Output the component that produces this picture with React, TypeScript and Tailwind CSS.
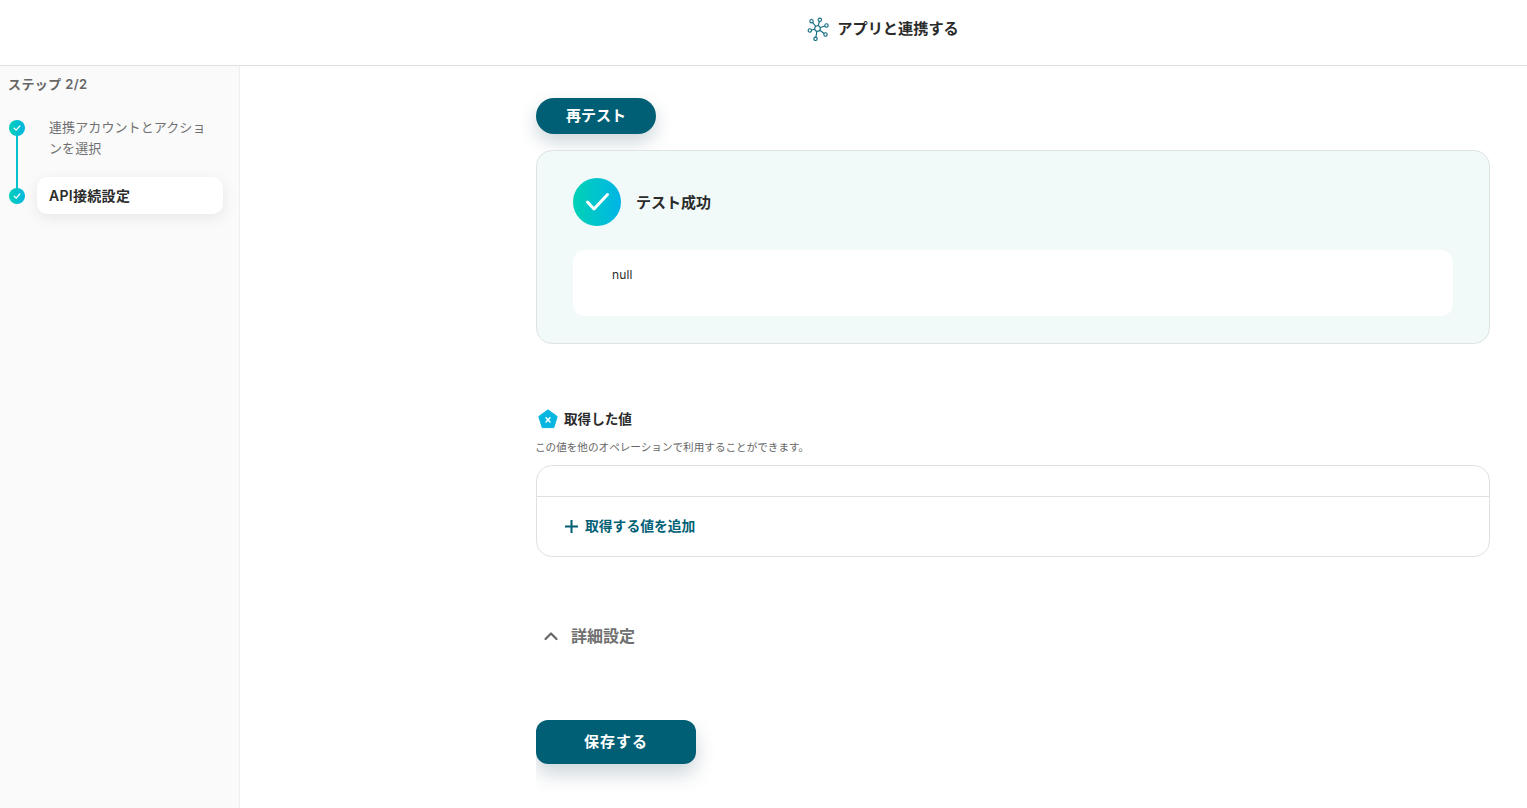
const font = { fontFamily: 'Inter, "Noto Sans CJK JP", sans-serif' };

function StepDot() {
  return (
    <span className="flex h-4 w-4 shrink-0 items-center justify-center rounded-full bg-gradient-to-r from-[#00d0b8] to-[#00b4e0]">
      <svg width="10" height="10" viewBox="0 0 10 10" fill="none" stroke="#fff" strokeWidth="1.2" strokeLinecap="round" strokeLinejoin="round">
        <path d="M2.2 5.2 4.2 7.1 7.8 3" />
      </svg>
    </span>
  );
}

function NetworkIcon() {
  const nodes = [
    [12.8, 2.8],
    [4.5, 4.2],
    [19.5, 8.5],
    [2.8, 13.5],
    [18.5, 17.5],
    [8.5, 21.8],
  ];
  return (
    <svg width="22" height="24" viewBox="0 0 22 24" fill="none" stroke="#0f6a80" strokeWidth="1.1">
      {nodes.map(([x, y]) => (
        <line key={`${x}-${y}`} x1="10.5" y1="11.5" x2={x} y2={y} />
      ))}
      <circle cx="10.5" cy="11.5" r="2.8" fill="#fff" />
      {nodes.map(([x, y]) => (
        <circle key={`${x}:${y}`} cx={x} cy={y} r="1.7" fill="#fff" />
      ))}
    </svg>
  );
}

export default function App() {
  return (
    <div style={font} className="flex h-[808px] w-full flex-col overflow-hidden bg-white text-[#2b2b2b]">
      <header className="flex h-[66px] shrink-0 items-center justify-center gap-[8px] border-b border-[#e0e0e0] pl-[239px] pb-[7px]">
        <NetworkIcon />
        <span className="text-[15.2px] font-semibold leading-none">アプリと連携する</span>
      </header>

      <div className="flex min-h-0 flex-1">
        <aside className="w-[240px] shrink-0 border-r border-[#efefef] bg-[#fafafa] pl-[9px] pt-[9px]">
          <p className="-ml-px text-[13px] font-semibold leading-[18px] tracking-[0.4px] text-[#666]">ステップ 2/2</p>
          <div className="relative mt-[15px] pr-4">
            <div className="absolute left-[7px] top-[24px] h-[62px] w-0.5 bg-[#00bfcf]" />
            <div className="flex h-[69px] gap-3">
              <div className="pt-[12px]">
                <StepDot />
              </div>
              <p className="w-[172px] pl-3 pt-[9px] text-[13px] leading-[21px] tracking-[0.1px] text-[#707070]">連携アカウントとアクションを選択</p>
            </div>
            <div className="relative flex items-center gap-3">
              <StepDot />
              <div className="flex h-[37px] flex-1 items-center rounded-[10px] bg-white pl-3 text-sm font-semibold tracking-[0.3px] shadow-[0_4px_14px_rgba(0,0,0,0.08)]">
                API接続設定
              </div>
            </div>
          </div>
        </aside>

        <main className="flex-1 pl-[296px] pr-[37px] pt-[32px]">
          <button className="flex h-9 w-[120px] items-center justify-center rounded-full bg-[#015f75] text-[15px] font-semibold text-white shadow-[0_8px_18px_rgba(1,50,70,0.2)]">
            再テスト
          </button>

          <section className="mt-4 h-[194px] rounded-2xl border border-[#dfe3e3] bg-[#f1f9f9] px-9 pt-[27px]">
            <div className="flex items-center gap-[15px]">
              <span className="flex h-12 w-12 items-center justify-center rounded-full bg-gradient-to-r from-[#00d2b4] to-[#00b4e6]">
                <svg width="28" height="24" viewBox="0 0 28 24" fill="none" stroke="#fff" strokeWidth="3" strokeLinecap="round" strokeLinejoin="round">
                  <path d="M4.5 12 11 19 24.5 4.5" />
                </svg>
              </span>
              <span className="pt-[3px] text-[15px] font-semibold">テスト成功</span>
            </div>
            <div className="mt-6 h-[66px] rounded-xl bg-white pl-[39px] pt-[16px] text-xs leading-[18px] tracking-[0.1px]">null</div>
          </section>

          <div className="mt-[65px] flex h-5 items-center gap-[6px] pl-[2px]">
            <svg width="20" height="20" viewBox="0 0 20 20">
              <path d="M10 .8 19.2 7.5 15.8 18.6H4.2L.8 7.5Z" fill="#06b6e0" stroke="#06b6e0" strokeLinejoin="round" />
              <path d="M8 8.8 12 13M12 8.8 8 13" stroke="#fff" strokeWidth="1.5" strokeLinecap="round" />
            </svg>
            <span className="pt-0.5 text-[13.6px] font-semibold leading-none">取得した値</span>
          </div>
          <p className="-ml-px mt-3 text-[10.6px] leading-[14px] text-[#666]">この値を他のオペレーションで利用することができます。</p>

          <section className="mt-[10px] h-[92px] rounded-2xl border border-[#e0e0e0]">
            <div className="h-[31px] border-b border-[#e0e0e0]" />
            <div className="flex h-[59px] items-center gap-[6px] pl-[27px]">
              <svg width="15" height="15" viewBox="0 0 15 15" stroke="#015f75" strokeWidth="2">
                <path d="M7.5 1v13M1 7.5h13" />
              </svg>
              <span className="pb-px text-[13.8px] font-semibold text-[#015f75]">取得する値を追加</span>
            </div>
          </section>

          <div className="mt-[68px] flex h-[22px] items-center gap-3 pl-[7px]">
            <svg width="16" height="16" viewBox="0 0 16 16" fill="none" stroke="#666" strokeWidth="2.2" strokeLinecap="round" strokeLinejoin="round">
              <path d="M2.5 11 8 5.5 13.5 11" />
            </svg>
            <span className="text-base font-semibold leading-none text-[#707070]">詳細設定</span>
          </div>

          <div className="mt-[73px] w-[200px] overflow-hidden pb-8">
            <button className="flex h-11 w-40 items-center justify-center rounded-xl bg-[#015f75] text-[15px] font-semibold tracking-[1px] text-white shadow-[0_10px_20px_rgba(1,50,70,0.2)]">
              保存する
            </button>
          </div>
        </main>
      </div>
    </div>
  );
}
